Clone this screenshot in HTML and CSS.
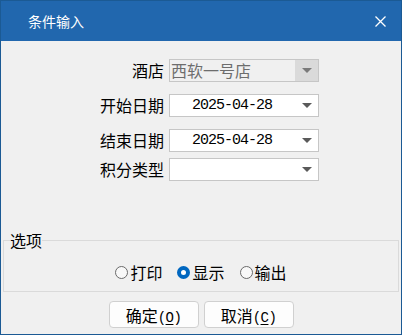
FILE: index.html
```html
<!DOCTYPE html>
<html lang="zh-CN">
<head>
  <meta charset="UTF-8">
  <title>条件输入</title>
  <link rel="stylesheet" href="styles.css">
</head>
<body>
  <div class="window">
    <div class="titlebar">
      <span class="title">条件输入</span>
      <span class="close">
        <svg width="11" height="11" viewBox="0 0 11 11"><path d="M0.5 0.5 L10.5 10.5 M10.5 0.5 L0.5 10.5" stroke="#fff" stroke-width="1.3" fill="none"/></svg>
      </span>
    </div>

    <div class="form">
      <div class="row">
        <label class="label">酒店</label>
        <div class="combo disabled"><span class="value">西软一号店</span><span class="drop"><i class="arrow"></i></span></div>
      </div>
      <div class="row">
        <label class="label">开始日期</label>
        <div class="combo"><span class="value date">2025-04-28</span><span class="drop"><i class="arrow"></i></span></div>
      </div>
      <div class="row tight">
        <label class="label">结束日期</label>
        <div class="combo"><span class="value date">2025-04-28</span><span class="drop"><i class="arrow"></i></span></div>
      </div>
      <div class="row">
        <label class="label">积分类型</label>
        <div class="combo"><span class="value"></span><span class="drop"><i class="arrow"></i></span></div>
      </div>
    </div>

    <fieldset class="options">
      <legend>选项</legend>
      <div class="radios">
        <label class="radio"><i class="dot"></i>打印</label>
        <label class="radio checked"><i class="dot"></i>显示</label>
        <label class="radio"><i class="dot"></i>输出</label>
      </div>
    </fieldset>

    <div class="buttons">
      <button class="btn">确定<span class="key">(<u>O</u>)</span></button>
      <button class="btn">取消<span class="key">(<u>C</u>)</span></button>
    </div>
  </div>
</body>
</html>
```

FILE: styles.css
```css
body {
  margin: 0;
  font-family: "Noto Sans CJK SC", "Noto Sans", sans-serif;
  font-size: 16px;
  color: #000;
}
.window {
  width: 402px;
  height: 335px;
  box-sizing: border-box;
  border: 1px solid #1b5a94;
  background: #f0f0f0;
  display: flex;
  flex-direction: column;
}
.titlebar {
  height: 40px;
  flex: none;
  background: #2167ae;
  color: #fff;
  display: flex;
  align-items: center;
  justify-content: space-between;
  padding: 0 15px 0 27px;
  font-size: 14px;
}
.close {
  display: flex;
}
.form {
  padding-top: 18px;
}
.row {
  display: flex;
  align-items: center;
  height: 23px;
  margin-bottom: 12px;
}
.row.tight {
  margin-bottom: 6px;
}
.row:last-child {
  margin-bottom: 0;
}
.label {
  width: 163px;
  margin-right: 5px;
  text-align: right;
  line-height: 23px;
}
.combo {
  width: 150px;
  height: 23px;
  box-sizing: border-box;
  border: 1px solid #c6c6c6;
  background: #fff;
  display: flex;
}
.combo .value {
  flex: 1;
  padding-left: 1px;
  line-height: 21px;
  white-space: nowrap;
}
.combo .date {
  padding-left: 22px;
  font-family: "Liberation Mono", monospace;
  font-size: 15px;
  letter-spacing: -1px;
}
.drop {
  width: 23px;
  display: flex;
  align-items: center;
  justify-content: center;
}
.arrow {
  width: 0;
  height: 0;
  border-left: 5px solid transparent;
  border-right: 5px solid transparent;
  border-top: 5px solid #5a5a5a;
}
.combo.disabled {
  background: #f0f0f0;
  color: #6d6d6d;
}
.combo.disabled .drop {
  background: #dadada;
}
.combo.disabled .arrow {
  border-top-color: #7a7a7a;
}
.options {
  margin: 49px 2px 0 2px;
  padding: 12px 0 9px 6px;
  border: 1px solid #dadada;
  min-width: 0;
}
.options legend {
  padding: 0;
  line-height: 20px;
}
.radios {
  display: flex;
  justify-content: center;
  gap: 15px;
  line-height: 20px;
  padding-right: 6px;
}
.radio {
  display: flex;
  align-items: center;
  gap: 2px;
}
.dot {
  width: 13px;
  height: 13px;
  box-sizing: border-box;
  border: 1px solid #6a6a6a;
  border-radius: 50%;
  background: #f8f8f8;
}
.radio.checked .dot {
  border: 4px solid #0067c0;
  background: #fff;
}
.buttons {
  display: flex;
  justify-content: center;
  gap: 5px;
  margin-top: 9px;
}
.btn {
  width: 90px;
  height: 27px;
  padding: 0;
  border: 1px solid #d0d0d0;
  border-radius: 4px;
  background: #fdfdfd;
  font-family: inherit;
  font-size: 16px;
  color: #000;
}
.key {
  font-family: "Liberation Mono", monospace;
  font-size: 14px;
  letter-spacing: -0.5px;
}
.key u {
  text-underline-offset: 2px;
}
```
